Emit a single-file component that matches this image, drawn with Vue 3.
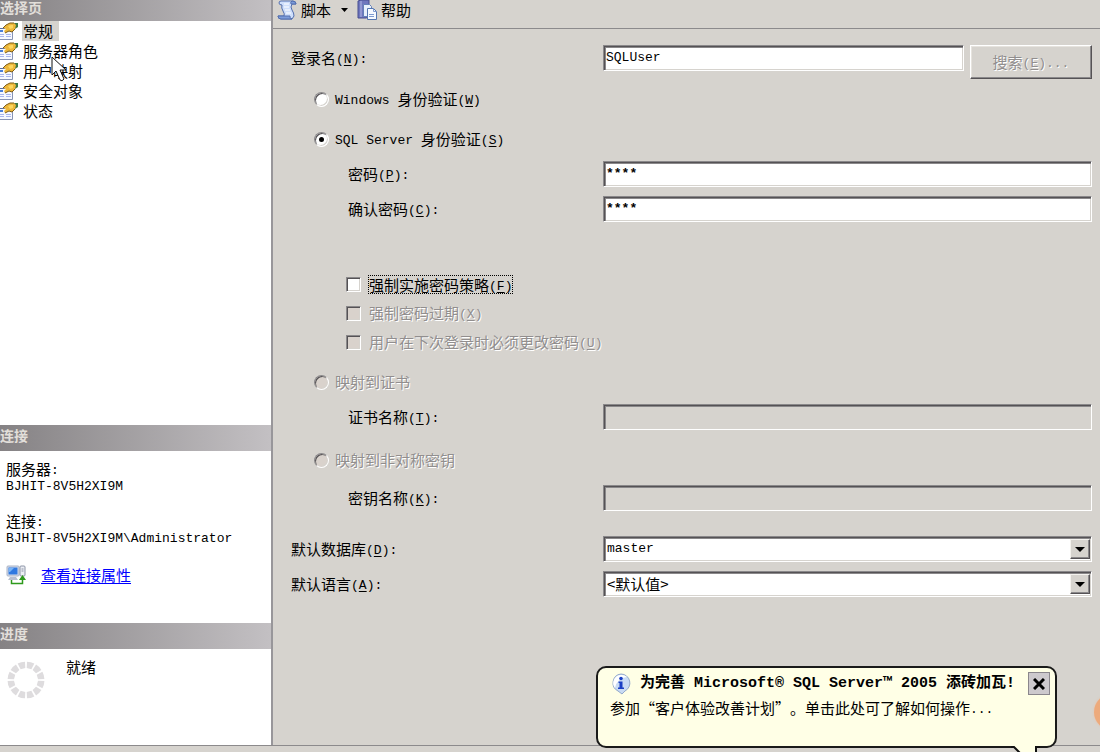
<script setup>
import { ref } from 'vue'

const pages = ['常规', '服务器角色', '用户映射', '安全对象', '状态']
const current = ref(0)
const auth = ref('sql')
const login = ref('SQLUser')
const password = ref('****')
const confirm = ref('****')
const enforce = ref(false)
const database = ref('master')
const language = ref('default')
const ticks = Array.from({ length: 12 }, (_, i) => i * 30 + 15)
</script>

<template>
  <div class="shell" lang="zh-CN">
    <div class="body">
      <aside class="side">
        <section class="pages">
          <h2 class="bar first">选择页</h2>
          <nav>
            <button
              v-for="(p, i) in pages"
              :key="p"
              type="button"
              class="page"
              @click="current = i"
            >
              <svg class="page-icon" width="19" height="18" viewBox="0 0 19 18" aria-hidden="true">
                <path d="M0 6h12v11H0z" fill="#f6f8fe" />
                <path d="M12.500 8v9.500H0" fill="none" stroke="#8793b4" />
                <path d="M0 6.500h5" stroke="#5a6f9c" />
                <path d="M0 9h3" stroke="#4a7fd6" stroke-width="2" />
                <path d="M0 12.500h4M6 12.500h5M0 14.500h4M6 14.500h5" stroke="#a9b6ee" />
                <path d="M13 1h5v4l-3 2z" fill="#3f7a45" />
                <path d="M3 6l3-3 4-2h4l2 2-1 4-3 3-3-1-4 2-1-2 2-2z" fill="#edb73a" />
                <path d="M3 6l3-3 4-2h4M15 7l-3 3-3-1-4 2" fill="none" stroke="#7d5c16" />
                <path d="M8 4l3-1h2v3l-3 1z" fill="#fbd65e" />
              </svg>
              <span class="page-name" :class="{ on: current === i }">{{ p }}</span>
            </button>
          </nav>
        </section>

        <section class="conn">
          <h2 class="bar">连接</h2>
          <div class="conn-body">
            <p>服务器<span class="a">:</span><br /><span class="a">BJHIT-8V5H2XI9M</span></p>
            <p>连接<span class="a">:</span><br /><span class="a">BJHIT-8V5H2XI9M\Administrator</span></p>
            <div class="props">
              <svg width="20" height="20" viewBox="0 0 20 20" aria-hidden="true">
                <rect x="1" y="1" width="12" height="10" rx="1" fill="#d5dbe8" stroke="#a9b3c6" />
                <rect x="2.500" y="2.500" width="9" height="7" fill="#2f78e0" />
                <path d="M3 3h5l-4 4H3z" fill="#79b4f6" />
                <path d="M4 12h6l2 3H2z" fill="#b7bfd0" />
                <rect x="14" y="1" width="5" height="10" rx="1" fill="#eceef4" stroke="#8c94a6" />
                <path d="M15.500 4h2M15.500 6h2" stroke="#8c94a6" />
                <path d="M5.500 15v3.500h11V14" fill="none" stroke="#2e9a1c" stroke-width="1.500" />
                <path d="M16.500 10l3.500 5h-7z" fill="#2e9a1c" />
              </svg>
              <a href="#">查看连接属性</a>
            </div>
          </div>
        </section>

        <section class="progress">
          <h2 class="bar">进度</h2>
          <div class="progress-body">
            <svg width="38" height="38" viewBox="-19 -19 38 38" aria-hidden="true">
              <path
                v-for="t in ticks"
                :key="t"
                d="M-3.800 -18Q0 -19 3.800 -18L2.400 -11.800H-2.400Z"
                fill="#dedcde"
                :transform="`rotate(${t})`"
              />
            </svg>
            <span>就绪</span>
          </div>
        </section>
      </aside>

      <main class="main">
        <div class="tools">
          <button type="button" class="tool">
            <svg width="20" height="20" viewBox="0 0 20 20" aria-hidden="true">
              <path d="M4 1h12q3 0 3 3h-4q-2 3 0 6t2 6l-2 3H4q-3 0-3-3h6q1-2-1-5T5 5Q2 5 2 3t2-2z" fill="#cfdffb" stroke="#536fae" />
              <path d="M15 1q-2 1-1 3h5q0-3-4-3zM1 16q0 3 3 3h11q-3-1-2-3z" fill="#7d9cda" stroke="#536fae" />
              <path d="M7 4h5M7 7h5M8 10h5M9 13h5" stroke="#fff" />
            </svg>
            <span>脚本</span>
            <svg class="drop" width="7" height="4" viewBox="0 0 7 4" aria-hidden="true"><path d="M0 0h7L3.500 4z" /></svg>
          </button>
          <button type="button" class="tool">
            <svg width="20" height="20" viewBox="0 0 20 20" aria-hidden="true">
              <path d="M1 1l3-1h8v17l-3 1H1z" fill="#6f76bd" stroke="#464c90" />
              <path d="M4 1v16" stroke="#b4b9e6" />
              <path d="M6.500 4.500h6l2 2v10h-8z" fill="#e8f0fc" stroke="#6480b8" />
              <path d="M10.500 8.500h6l3 3v8h-9z" fill="#f6faff" stroke="#5577b0" />
              <path d="M16.500 8.500v3h3M12 14.500h5M12 16.500h5" fill="none" stroke="#7e9bd0" />
            </svg>
            <span>帮助</span>
          </button>
        </div>

        <form class="form" @submit.prevent>
          <div class="row top">
            <label for="login">登录名<span class="a">(<u>N</u>):</span></label>
            <div class="pair">
              <input id="login" v-model="login" class="box" type="text" />
              <button type="button" class="search" disabled>搜索<span class="a">(<u>E</u>)...</span></button>
            </div>
          </div>

          <div class="opt radio win">
            <input id="win" v-model="auth" type="radio" value="win" name="auth" />
            <label for="win"><span class="a">Windows </span>身份验证<span class="a">(<u>W</u>)</span></label>
          </div>
          <div class="opt radio">
            <input id="sql" v-model="auth" type="radio" value="sql" name="auth" />
            <label for="sql"><span class="a">SQL Server </span>身份验证<span class="a">(<u>S</u>)</span></label>
          </div>

          <div class="row sub after-opt">
            <label for="pwd">密码<span class="a">(<u>P</u>):</span></label>
            <input id="pwd" v-model="password" class="box secret" type="text" autocomplete="off" />
          </div>
          <div class="row sub">
            <label for="pwd2">确认密码<span class="a">(<u>C</u>):</span></label>
            <input id="pwd2" v-model="confirm" class="box secret" type="text" autocomplete="off" />
          </div>

          <div class="opt check policy">
            <input id="enforce" v-model="enforce" type="checkbox" />
            <label for="enforce" class="focus">强制实施密码策略<span class="a">(<u>F</u>)</span></label>
          </div>
          <div class="opt check">
            <input id="expire" type="checkbox" disabled />
            <label for="expire">强制密码过期<span class="a">(<u>X</u>)</span></label>
          </div>
          <div class="opt check">
            <input id="change" type="checkbox" disabled />
            <label for="change">用户在下次登录时必须更改密码<span class="a">(<u>U</u>)</span></label>
          </div>

          <div class="opt radio">
            <input id="cert" type="radio" name="auth" value="cert" disabled />
            <label for="cert">映射到证书</label>
          </div>
          <div class="row sub after-opt">
            <label for="certname">证书名称<span class="a">(<u>T</u>):</span></label>
            <input id="certname" class="box" type="text" disabled />
          </div>
          <div class="opt radio">
            <input id="key" type="radio" name="auth" value="key" disabled />
            <label for="key">映射到非对称密钥</label>
          </div>
          <div class="row sub key-row">
            <label for="keyname">密钥名称<span class="a">(<u>K</u>):</span></label>
            <input id="keyname" class="box" type="text" disabled />
          </div>

          <div class="row defaults">
            <label for="db">默认数据库<span class="a">(<u>D</u>):</span></label>
            <div class="combo">
              <select id="db" v-model="database" class="box"><option value="master">master</option></select>
              <span class="arrow"><svg width="10" height="5" viewBox="0 0 10 5" aria-hidden="true"><path d="M0 0h10L5 5z" /></svg></span>
            </div>
          </div>
          <div class="row">
            <label for="lang">默认语言<span class="a">(<u>A</u>):</span></label>
            <div class="combo">
              <select id="lang" v-model="language" class="box han"><option value="default">&lt;默认值&gt;</option></select>
              <span class="arrow"><svg width="10" height="5" viewBox="0 0 10 5" aria-hidden="true"><path d="M0 0h10L5 5z" /></svg></span>
            </div>
          </div>
        </form>
      </main>
    </div>
    <footer class="foot"></footer>

    <div class="orb"></div>

    <div class="balloon" role="status">
      <div class="balloon-head">
        <svg width="22" height="22" viewBox="0 0 22 22" aria-hidden="true">
          <path d="M11 1a9 9 0 0 1 4 17l-3 3-4-3A9 9 0 0 1 11 1z" fill="#c9dbf4" stroke="#93a9cb" />
          <path d="M11 2a8 8 0 0 0-6 13q2-10 12-11a8 8 0 0 0-6-2z" fill="#fff" />
          <circle cx="11" cy="5.500" r="1.800" fill="#1a3fc4" />
          <path d="M8.500 8.500h4v6h1.500v1.500h-6v-1.500h1.500V10H8.500z" fill="#1a3fc4" />
        </svg>
        <strong>为完善 Microsoft® SQL Server™ 2005 添砖加瓦!</strong>
        <button type="button" class="close" aria-label="关闭">
          <svg width="12" height="12" viewBox="0 0 12 12" aria-hidden="true"><path d="M1 1l10 10M11 1L1 11" stroke="#000" stroke-width="3" /></svg>
        </button>
      </div>
      <p>参加“客户体验改善计划”。单击此处可了解如何操作<span class="a">...</span></p>
      <svg class="tail" width="30" height="8" viewBox="0 0 30 8" aria-hidden="true">
        <path d="M2 0h24v8H9z" fill="#ffffe6" />
        <path d="M0 1h3l7 7M25 8V1h4" fill="none" stroke="#111" stroke-width="2" />
      </svg>
    </div>

    <svg class="pointer" width="17" height="27" viewBox="0 0 17 27" aria-hidden="true">
      <path d="M1 1v18l4-4 4 9q2 2 4-1l-4-9h6z" fill="#fff" stroke="#111" />
    </svg>
  </div>
</template>

<style>
body {
  margin: 0;
  background: #d6d3ce;
}
</style>

<style scoped>
.shell {
  position: relative;
  display: flex;
  flex-direction: column;
  min-height: 100vh;
  overflow: hidden;
  background: #d6d3ce;
  color: #000;
  font: 15px/20px "Noto Sans CJK SC", sans-serif;
  text-spacing-trim: space-all;
}
.shell * {
  box-sizing: border-box;
}
button,
input,
select {
  margin: 0;
  padding: 0;
  border: 0;
  border-radius: 0;
  background: none;
  color: inherit;
  font: inherit;
}
p,
h2 {
  margin: 0;
}
.a {
  font-family: "Liberation Mono", monospace;
  font-size: 13px;
  line-height: 1;
  vertical-align: 1px;
  white-space: pre;
}
u {
  text-underline-offset: 2px;
}
.body {
  display: flex;
  flex: 1;
}
.side {
  display: flex;
  flex-direction: column;
  flex: none;
  width: 273px;
  border-right: 2px solid #98969a;
  background: #fff;
}
.bar {
  height: 26px;
  background: linear-gradient(90deg, #858284, #c3c0c3);
  color: #e2dfda;
  font-size: 14px;
  line-height: 20px;
}
.bar.first {
  height: 21px;
  line-height: 14px;
}
.pages {
  flex: 1;
}
.page {
  display: flex;
  align-items: center;
  height: 20px;
}
.page-icon {
  flex: none;
}
.page-name {
  margin-left: 3px;
  padding: 0 6px 0 1px;
  line-height: 20px;
}
.page-name.on {
  background: #d6d3ce;
}
.conn {
  min-height: 198px;
}
.conn-body {
  display: flex;
  flex-direction: column;
  gap: 20px;
  padding: 10px 6px;
  line-height: 15px;
}
.props {
  display: flex;
  align-items: center;
  gap: 15px;
  line-height: 20px;
}
.props a {
  color: #00f;
  text-underline-offset: 2px;
}
.progress {
  min-height: 122px;
}
.progress-body {
  display: flex;
  gap: 21px;
  padding: 8px 7px;
}
.progress-body svg {
  margin-top: 4px;
}
.main {
  flex: 1;
  min-width: 0;
}
.tools {
  display: flex;
  gap: 9px;
  height: 29px;
  padding: 0 4px 9px;
  border-bottom: 1px solid #8c8a8c;
}
.tool {
  display: flex;
  align-items: center;
  gap: 4px;
  height: 20px;
}
.drop {
  margin-left: 6px;
}
.form {
  padding: 16px 8px 16px 18px;
}
.row {
  display: grid;
  grid-template-columns: 312px minmax(0, 1fr);
  align-items: start;
  margin-top: 9px;
  line-height: 26px;
}
.row.top {
  margin-top: 0;
}
.row.sub > label {
  padding-left: 57px;
}
.row.after-opt {
  margin-top: 12px;
}
.row.key-row {
  margin-top: 15px;
}
.row.defaults {
  margin-top: 25px;
}
.pair {
  display: flex;
  align-items: flex-start;
  gap: 6px;
}
.box {
  display: block;
  width: 100%;
  height: 26px;
  padding: 0 2px 2px;
  border: 1px solid;
  border-color: #8a888a #fff #fff #8a888a;
  background: #fff;
  box-shadow: inset 1px 1px #555255, inset 2px 2px #8a888a, inset -1px -1px #d6d3ce;
  font: 13px/20px "Liberation Mono", monospace;
}
.box.secret {
  font-weight: bold;
}
.box:disabled {
  background: #d6d3ce;
}
select.box {
  appearance: none;
  padding: 0 24px 0 3px;
}
select.box.han {
  font: 15px/20px "Noto Sans CJK SC", sans-serif;
}
.search {
  flex: none;
  width: 122px;
  height: 34px;
  border: 1px solid;
  border-color: #fff #555255 #555255 #fff;
  box-shadow: inset -1px -1px #8a888a, inset 1px 1px #e6e3de;
}
.search:disabled,
.opt input:disabled + label {
  color: #918e8e;
  text-shadow: 1px 1px #fff;
}
.opt {
  display: flex;
  align-items: center;
  height: 20px;
  margin-top: 20px;
}
.opt.win {
  margin-top: 10px;
}
.opt.radio {
  gap: 6px;
  padding-left: 23px;
}
.opt.check {
  gap: 8px;
  margin-top: 9px;
  padding-left: 55px;
}
.opt.policy {
  margin-top: 52px;
}
.opt input {
  appearance: none;
  flex: none;
  display: grid;
  place-items: center;
  width: 15px;
  height: 15px;
  border: 1px solid;
  border-color: #8a888a #fff #fff #8a888a;
  background: #fff;
  box-shadow: inset 1px 1px #555255, inset -1px -1px #d6d3ce;
}
.opt input[type="radio"] {
  border-radius: 50%;
}
.opt input:disabled {
  background: #d9d2cc;
}
.opt input[type="radio"]:checked::before {
  content: "";
  width: 5px;
  height: 5px;
  border-radius: 50%;
  background: #000;
}
.opt input[type="checkbox"]:checked::before {
  content: "✓";
  font-size: 12px;
  line-height: 12px;
}
.focus {
  outline: 1px dotted #000;
  outline-offset: 0;
  line-height: 17px;
}
.combo {
  position: relative;
}
.arrow {
  position: absolute;
  top: 3px;
  right: 2px;
  bottom: 3px;
  display: grid;
  place-items: center;
  width: 20px;
  border: 1px solid;
  border-color: #f4f2ee #555255 #555255 #f4f2ee;
  background: #d6d3ce;
  box-shadow: inset -1px -1px #8a888a;
  pointer-events: none;
}
.foot {
  height: 7px;
  border-top: 1px solid #8c8a8c;
}
.orb {
  position: absolute;
  right: -30px;
  bottom: 22px;
  width: 36px;
  height: 36px;
  border-radius: 50%;
  background: #edaa7c;
  box-shadow: 0 0 3px #e6c4ae;
}
.balloon {
  position: absolute;
  right: 43px;
  bottom: 4px;
  width: 461px;
  height: 82px;
  padding: 4px 5px 4px 12px;
  border: 2px solid #1a1a1a;
  border-radius: 10px;
  background: #ffffe6;
}
.balloon-head {
  display: flex;
  align-items: center;
  height: 23px;
}
.balloon-head strong {
  margin-left: 8px;
  font: bold 15px/22px "Liberation Mono", "Noto Sans CJK SC", monospace;
  white-space: nowrap;
}
.close {
  display: grid;
  place-items: center;
  flex: none;
  width: 22px;
  height: 23px;
  margin-left: auto;
  border: 1px solid #8a868c;
  background: #cdc9cd;
}
.balloon p {
  margin-top: 3px;
  line-height: 20px;
  white-space: nowrap;
}
.tail {
  position: absolute;
  right: 14px;
  bottom: -8px;
}
.pointer {
  position: absolute;
  top: 56px;
  left: 51px;
}
</style>
